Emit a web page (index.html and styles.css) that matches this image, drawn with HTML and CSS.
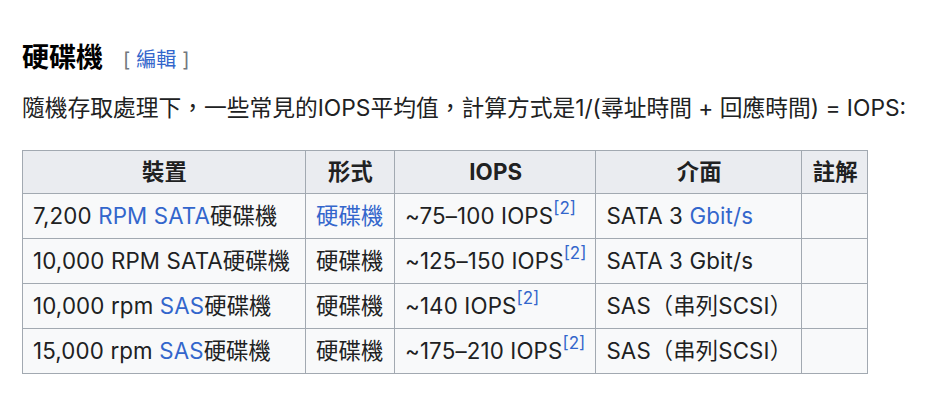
FILE: index.html
```html
<!DOCTYPE html>
<html lang="zh-Hant">
<head>
<meta charset="utf-8">
<link rel="stylesheet" href="styles.css">
</head>
<body>
<div class="content">
  <h2 class="heading"><span class="title">硬碟機</span><span class="edit"><span class="br">[</span><a href="#">編輯</a><span class="br">]</span></span></h2>
  <p class="lead">隨機存取處理下，一些常見的IOPS平均值，計算方式是1/(尋址時間 + 回應時間) = IOPS:</p>
  <table class="wikitable">
    <thead>
      <tr>
        <th class="c1">裝置</th>
        <th class="c2">形式</th>
        <th class="c3">IOPS</th>
        <th class="c4">介面</th>
        <th class="c5">註解</th>
      </tr>
    </thead>
    <tbody>
      <tr>
        <td>7,200 <a href="#">RPM</a> <a href="#">SATA</a>硬碟機</td>
        <td><a href="#">硬碟機</a></td>
        <td>~75–100 IOPS<sup><a href="#">[2]</a></sup></td>
        <td>SATA 3 <a href="#">Gbit/s</a></td>
        <td></td>
      </tr>
      <tr>
        <td>10,000 RPM SATA硬碟機</td>
        <td>硬碟機</td>
        <td>~125–150 IOPS<sup><a href="#">[2]</a></sup></td>
        <td>SATA 3 Gbit/s</td>
        <td></td>
      </tr>
      <tr>
        <td>10,000 rpm <a href="#">SAS</a>硬碟機</td>
        <td>硬碟機</td>
        <td>~140 IOPS<sup><a href="#">[2]</a></sup></td>
        <td>SAS（串列SCSI）</td>
        <td></td>
      </tr>
      <tr>
        <td>15,000 rpm <a href="#">SAS</a>硬碟機</td>
        <td>硬碟機</td>
        <td>~175–210 IOPS<sup><a href="#">[2]</a></sup></td>
        <td>SAS（串列SCSI）</td>
        <td></td>
      </tr>
    </tbody>
  </table>
</div>
</body>
</html>
```
FILE: styles.css
```css
html, body {
  margin: 0;
  padding: 0;
  background: #ffffff;
}
body {
  font-family: Inter, "Noto Sans CJK TC", sans-serif;
  color: #202122;
}
a {
  color: #3366cc;
  text-decoration: none;
}
.content {
  padding: 41px 0 0 22px;
}
.heading {
  margin: 0;
  height: 34px;
  line-height: 34px;
  display: flex;
  align-items: baseline;
  font-weight: normal;
}
.title {
  font-size: 27px;
  font-weight: bold;
  color: #000000;
}
.edit {
  margin-left: 20px;
  font-size: 20px;
  color: #54595d;
  display: inline-flex;
  gap: 6px;
}
.edit .br {
  color: #72777d;
}
.lead {
  margin: 15px 0 0 0;
  font-size: 22.75px;
  line-height: 35px;
  color: #202122;
}
.wikitable {
  margin-top: 25px;
  border-collapse: collapse;
  border: 1px solid #a2a9b1;
  background: #f8f9fa;
  font-size: 22.3px;
  line-height: 34px;
  letter-spacing: 0.15px;
}
.wikitable th,
.wikitable td {
  border: 1px solid #a2a9b1;
  padding: 4px 9px 4px 10px;
  white-space: nowrap;
}
.wikitable thead tr {
  height: 43px;
}
.wikitable tbody tr {
  height: 45px;
}
.wikitable th {
  background: #eaecf0;
  font-weight: bold;
  text-align: center;
  color: #202122;
}
.wikitable td {
  text-align: left;
}
.c1 { width: 263px; }
.c2 { width: 69px; }
.c3 { width: 181px; }
.c4 { width: 184px; }
.c5 { width: 46px; }
sup {
  font-size: 17px;
  line-height: 1;
  letter-spacing: 0;
  vertical-align: 10px;
}
```
